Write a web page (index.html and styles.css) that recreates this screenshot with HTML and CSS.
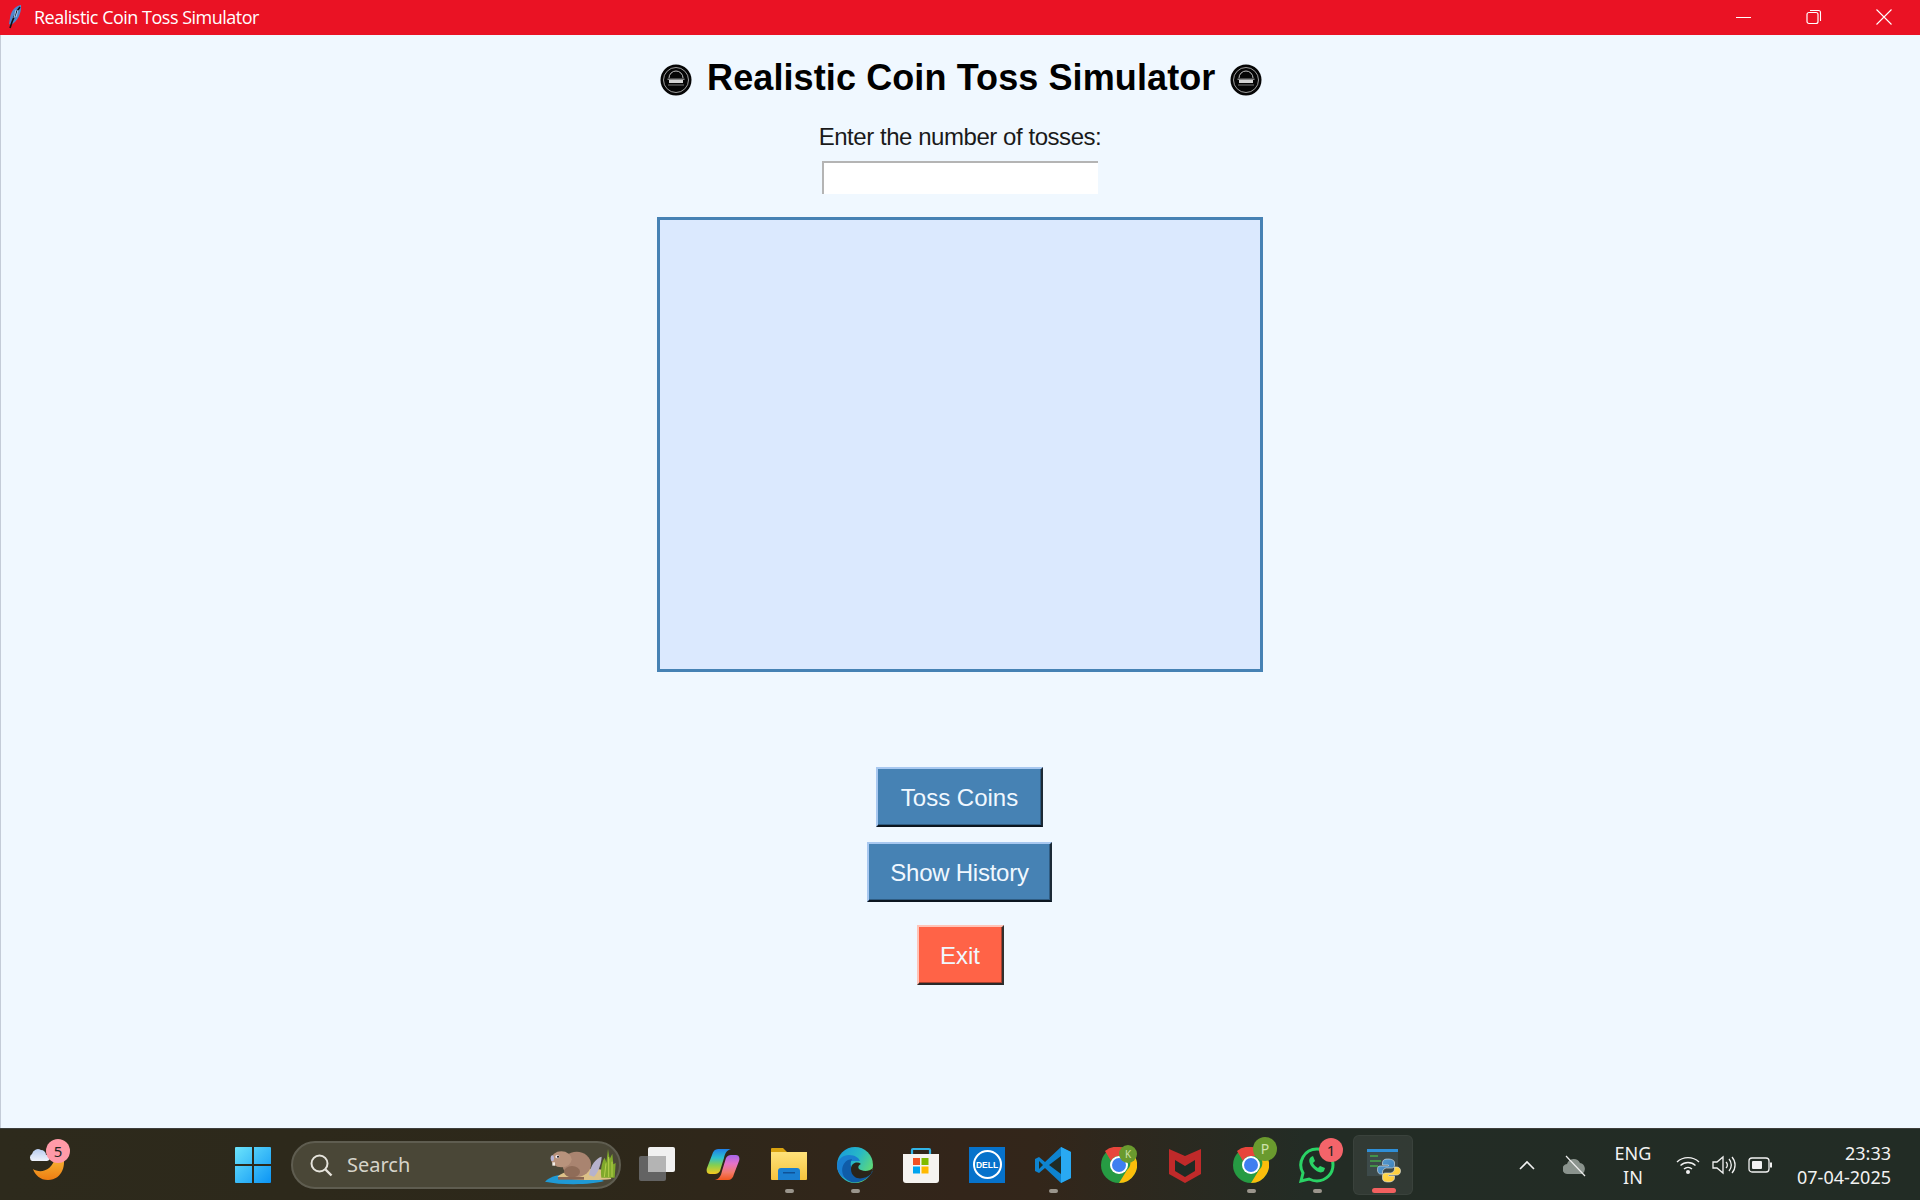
FILE: index.html
```html
<!DOCTYPE html>
<html lang="en">
<head>
<meta charset="utf-8">
<title>Realistic Coin Toss Simulator</title>
<link rel="stylesheet" href="styles.css">
</head>
<body>
<header class="titlebar">
  <svg class="feather" viewBox="0 0 16 26" width="16" height="26"><path d="M14 1C8 2 4 7 3 14l-1 6 2 1C10 18 15 9 14 1Z" fill="#4f86cc"/><path d="M13 3C9 8 6 14 3 24" stroke="#111" stroke-width="1.600" fill="none"/><path d="M9 6 7 14M11 6l-2 7" stroke="#a9c9ef" stroke-width="1"/></svg>
  <span class="titlebar-text">Realistic Coin Toss Simulator</span>
  <div class="win-controls">
    <span class="win-btn"><svg width="16" height="16" viewBox="0 0 16 16"><path d="M0 8.500h15" stroke="#fff" stroke-width="1" fill="none"/></svg></span>
    <span class="win-btn"><svg width="16" height="16" viewBox="0 0 16 16"><rect x="1" y="3.500" width="11" height="11" rx="2" stroke="#fff" stroke-width="1.200" fill="none"/><path d="M4 1.500h8.500a2 2 0 0 1 2 2V12" stroke="#fff" stroke-width="1.100" fill="none"/></svg></span>
    <span class="win-btn"><svg width="16" height="16" viewBox="0 0 16 16"><path d="M.5.5l15 15M15.500.5l-15 15" stroke="#fff" stroke-width="1.100" fill="none"/></svg></span>
  </div>
</header>

<main class="app">
  <h1 class="heading">
    <svg class="coin" viewBox="0 0 32 32" width="32" height="32"><circle cx="16" cy="16" r="15.500" fill="#060606"/><circle cx="16" cy="16" r="12.500" fill="none" stroke="#a0a0a0" stroke-width="1"/><path d="M9 14a7 7 0 0 1 14 0" fill="none" stroke="#c0c0c0" stroke-width="1"/><rect x="7.500" y="14.500" width="17" height="1.500" fill="#8a8a8a"/><rect x="9" y="16" width="14" height="3" fill="#d4d4d4"/><rect x="8" y="20.500" width="16" height="1" fill="#777"/></svg>
    <span class="heading-text">Realistic Coin Toss Simulator</span>
    <svg class="coin" viewBox="0 0 32 32" width="32" height="32"><circle cx="16" cy="16" r="15.500" fill="#060606"/><circle cx="16" cy="16" r="12.500" fill="none" stroke="#a0a0a0" stroke-width="1"/><path d="M9 14a7 7 0 0 1 14 0" fill="none" stroke="#c0c0c0" stroke-width="1"/><rect x="7.500" y="14.500" width="17" height="1.500" fill="#8a8a8a"/><rect x="9" y="16" width="14" height="3" fill="#d4d4d4"/><rect x="8" y="20.500" width="16" height="1" fill="#777"/></svg>
  </h1>
  <label class="prompt" for="tosses">Enter the number of tosses:</label>
  <input class="tosses" id="tosses" type="text">
  <div class="stage"></div>
  <button class="btn btn-blue btn-toss" type="button">Toss Coins</button>
  <button class="btn btn-blue btn-history" type="button">Show History</button>
  <button class="btn btn-red" type="button">Exit</button>
</main>

<footer class="taskbar">
  <div class="weather">
    <svg viewBox="0 0 44 48" width="44" height="48"><defs><linearGradient id="moon" x1="0" y1="0" x2="0" y2="1"><stop offset="0" stop-color="#f9c23c"/><stop offset="1" stop-color="#ee7d12"/></linearGradient><linearGradient id="cloud" x1="0" y1="0" x2="0" y2="1"><stop offset="0" stop-color="#b9cdf0"/><stop offset="1" stop-color="#eef2fb"/></linearGradient></defs><path d="M8 26C14 30 27 30 31 12L37 10C42 20 38 37 23 37 15 37 10 32 8 26Z" fill="url(#moon)"/><path d="M7 18a4 4 0 0 1 0-7 6 6 0 0 1 9-4 5 5 0 0 1 5 5 3 3 0 0 1 1 6Z" fill="url(#cloud)"/></svg>
    <span class="badge badge-weather">5</span>
  </div>
  <div class="tb-center">
    <div class="slot"><svg viewBox="0 0 36 36" width="36" height="36"><defs><linearGradient id="win" x1="0" y1="0" x2="1" y2="1"><stop offset="0" stop-color="#6ce4fb"/><stop offset="1" stop-color="#0b94f5"/></linearGradient></defs><path d="M0 1a1 1 0 0 1 1-1h16v17H0ZM19 0h16a1 1 0 0 1 1 1v16H19ZM0 19h17v17H1a1 1 0 0 1-1-1ZM19 19h17v16a1 1 0 0 1-1 1H19Z" fill="url(#win)"/></svg></div>
    <div class="search">
      <svg viewBox="0 0 24 24" width="24" height="24"><circle cx="10.500" cy="10.500" r="8" fill="none" stroke="#e6e4dc" stroke-width="2"/><path d="M16.500 16.500l6 6" stroke="#e6e4dc" stroke-width="2.400"/></svg>
      <span class="search-text">Search</span>
      <svg class="beaver" viewBox="0 0 216 120" width="72" height="40"><path d="M3 110C20 90 60 86 100 88l60 10 20 10c-30 10-120 14-177 2Z" fill="#1f9ad6"/><path d="M40 95C70 70 150 66 190 78l12 24c-40 6-120 4-162-7Z" fill="#dcc188"/><path d="M135 90C140 60 155 40 173 35 172 60 160 85 150 95Z" fill="#b6b2cc"/><path d="M172 98C168 70 176 45 182 38l5 14 5-40 5 30 8-16 3 32 7-4-3 44Z" fill="#7fa82b"/><path d="M181 96 186 55M194 96V36M204 96V50" stroke="#b6cf4c" stroke-width="3" fill="none"/><ellipse cx="98" cy="58" rx="43" ry="38" fill="#a98470"/><ellipse cx="52" cy="43" rx="31" ry="24" fill="#b8937c"/><ellipse cx="84" cy="80" rx="24" ry="17" fill="#8f6c58"/><path d="M42 96h78v8H42Z" fill="#8a6652"/><ellipse cx="40" cy="35" rx="6" ry="5" fill="#efe8ea"/><circle cx="42" cy="35" r="3" fill="#15121a"/><ellipse cx="25" cy="40" rx="5" ry="9" fill="#b7b5d6"/><rect x="25" y="52" width="8" height="10" fill="#f2eee6"/></svg>
    </div>
    <div class="slot"><svg viewBox="0 0 36 36" width="36" height="36"><rect x="0" y="9" width="27" height="25" rx="2" fill="#636363"/><rect x="9" y="0" width="27" height="25" rx="2" fill="#f1f1f1"/><rect x="9" y="9" width="18" height="16" fill="#b4b4b4"/></svg></div>
    <div class="slot"><svg viewBox="0 0 36 36" width="36" height="36"><defs><linearGradient id="cp1" x1="0" y1="0" x2="0" y2="1"><stop offset="0" stop-color="#1f7fe8"/><stop offset=".35" stop-color="#2cc0d0"/><stop offset=".65" stop-color="#86cf4f"/><stop offset="1" stop-color="#f7c91e"/></linearGradient><linearGradient id="cp2" x1="0" y1="0" x2="0" y2="1"><stop offset="0" stop-color="#f2561e"/><stop offset=".3" stop-color="#f27a6a"/><stop offset=".65" stop-color="#e572c8"/><stop offset="1" stop-color="#a766ea"/></linearGradient></defs><path d="M13 2H26C22 3 20 6 19 11L15 24C14 26 12 27 10 27H5C2 27 1 24 2 21L7 8C8 4 10 2 13 2Z" fill="url(#cp1)"/><path d="M13 2H26C22 3 20 6 19 11L15 24C14 26 12 27 10 27H5C2 27 1 24 2 21L7 8C8 4 10 2 13 2Z" fill="url(#cp2)" transform="rotate(180 18 17.500)"/></svg></div>
    <div class="slot slot-open"><svg viewBox="0 0 36 36" width="36" height="36"><defs><linearGradient id="fold" x1="0" y1="0" x2="0" y2="1"><stop offset="0" stop-color="#ffe27a"/><stop offset="1" stop-color="#f5c33d"/></linearGradient></defs><path d="M0 2a1 1 0 0 1 1-1h11l4 4h20v6H0Z" fill="#d9a20f"/><path d="M0 5h36v27a1 1 0 0 1-1 1H1a1 1 0 0 1-1-1Z" fill="url(#fold)"/><path d="M7 24a3 3 0 0 1 3-3h16a3 3 0 0 1 3 3v9H7Z" fill="#1a7fd1"/><rect x="12" y="25" width="12" height="1.500" fill="#0f5297"/></svg></div>
    <div class="slot slot-open"><svg viewBox="0 0 36 36" width="36" height="36"><defs><linearGradient id="edge1" x1="0" y1="0" x2="1" y2=".6"><stop offset="0" stop-color="#1797dd"/><stop offset=".55" stop-color="#27b9c6"/><stop offset="1" stop-color="#63db72"/></linearGradient></defs><circle cx="18" cy="18" r="18" fill="url(#edge1)"/><path d="M0 18C1 12 6 8 12 8 18 8 22 11 23 14L11 14 9 32C3 29 0 24 0 18Z" fill="#1a7fd0"/><path d="M11 13C5 16 3 25 8 31 12 36 20 37 27 33 31 31 34 28 36 24 30 28 22 28 17 24 13 21 13 16 15 12Z" fill="#0f5ca8"/><path d="M14 22C14 16 20 14 24 17 21 18 20 22 24 23 28 25 33 24 36 21L34 27C30 31 22 33 18 30 15 28 14 25 14 22Z" fill="#2a241a"/></svg></div>
    <div class="slot"><svg viewBox="0 0 36 36" width="36" height="36"><path d="M9 7V3a1 1 0 0 1 1-1h16a1 1 0 0 1 1 1v4" fill="none" stroke="#32b4e6" stroke-width="2.200"/><path d="M0 7h36v26a3 3 0 0 1-3 3H3a3 3 0 0 1-3-3Z" fill="#f5f3f0"/><rect x="10" y="11" width="7" height="7" fill="#f25022"/><rect x="18.500" y="11" width="7" height="7" fill="#7fba00"/><rect x="10" y="19.500" width="7" height="7" fill="#00a4ef"/><rect x="18.500" y="19.500" width="7" height="7" fill="#ffb900"/></svg></div>
    <div class="slot"><span class="dell"><span class="dell-ring">DELL</span></span></div>
    <div class="slot slot-open"><svg viewBox="0 0 36 36" width="36" height="36"><path d="M26 0l10 5v26l-10 5L10 21l-6 5-4-2V12l4-2 6 5Z" fill="#0e83cf"/><path d="M26 0v36l10-5V5Z" fill="#29a9f2"/><path d="M26 9 14 18l12 9Z" fill="#1f2b24"/><path d="M4 14v8l4-4Z" fill="#1f2b24"/></svg></div>
    <div class="slot"><svg viewBox="0 0 36 36" width="36" height="36"><circle cx="18" cy="18" r="18" fill="#269b43"/><path d="M18 0a18 18 0 0 1 15.600 9H18a9 9 0 0 0-8 5L4 4A18 18 0 0 1 18 0Z" fill="#e8453b"/><path d="M33.600 9A18 18 0 0 1 18 36l8-13a9 9 0 0 0 0-14Z" fill="#fbbd0b"/><circle cx="18" cy="18" r="9" fill="#fff"/><circle cx="18" cy="18" r="7" fill="#3f7ff0"/></svg><span class="badge badge-k">K</span></div>
    <div class="slot"><svg viewBox="0 0 32 36" width="32" height="36"><path d="M0 2l16 7 16-7v25L16 36 0 27Z" fill="#c02a2a"/><path d="M6 11l10 5 10-5v13l-10 6-10-6Z" fill="#1f2b24"/><path d="M6 10v3l10 6 10-6v-3l-10 5Z" fill="#c02a2a"/></svg></div>
    <div class="slot slot-open"><svg viewBox="0 0 36 36" width="36" height="36"><circle cx="18" cy="18" r="18" fill="#269b43"/><path d="M18 0a18 18 0 0 1 15.600 9H18a9 9 0 0 0-8 5L4 4A18 18 0 0 1 18 0Z" fill="#e8453b"/><path d="M33.600 9A18 18 0 0 1 18 36l8-13a9 9 0 0 0 0-14Z" fill="#fbbd0b"/><circle cx="18" cy="18" r="9" fill="#fff"/><circle cx="18" cy="18" r="7" fill="#3f7ff0"/></svg><span class="badge badge-p">P</span></div>
    <div class="slot slot-open"><svg viewBox="0 0 36 36" width="36" height="36"><path d="M18 2a16 16 0 0 1 0 32c-3 0-6-1-8-2l-8 2 2-8A16 16 0 0 1 18 2Z" fill="#1f2b24" stroke="#2ad365" stroke-width="3"/><path d="M12 10c-3 2-2 7 2 11s8 6 11 3l1-3-5-2-2 2c-2-1-4-3-5-5l2-2-2-5Z" fill="#2ad365"/></svg><span class="badge badge-w">1</span></div>
    <div class="slot slot-active"><svg viewBox="0 0 36 36" width="36" height="36"><defs><linearGradient id="py1" x1="0" y1="0" x2="1" y2="1"><stop offset="0" stop-color="#5a9fd4"/><stop offset="1" stop-color="#3a7cb4"/></linearGradient><linearGradient id="py2" x1="0" y1="0" x2="1" y2="1"><stop offset="0" stop-color="#ffe052"/><stop offset="1" stop-color="#ffc331"/></linearGradient></defs><rect x="2" y="2" width="31" height="27" fill="#3d4a4a"/><rect x="2" y="2" width="31" height="3" fill="#2f8fd8"/><path d="M5 9h8M5 14h11M5 19h8" stroke="#46a84a" stroke-width="1.500"/><g transform="translate(1.500 -1)" stroke="#dfe8ee" stroke-width=".6"><path d="M21 13c-4 0-5 2-5 4v2h6v1h-8c-3 0-3 2-3 4s1 4 3 4h2v-2c0-2 2-4 4-4h5c2 0 3-1 3-3v-2c0-3-3-4-7-4Z" fill="url(#py1)"/><path d="M22 36c4 0 6-2 6-4v-2h-6v-1h8c3 0 4-2 4-4s-1-4-4-4h-2v2c0 2-2 4-4 4h-5c-2 0-3 1-3 3v2c0 3 2 4 6 4Z" fill="url(#py2)"/></g></svg></div>
  </div>
  <div class="tray">
    <svg class="tray-chevron" viewBox="0 0 16 10" width="16" height="10"><path d="M1 9l7-7 7 7" stroke="#f2f2f2" stroke-width="1.600" fill="none"/></svg>
    <svg class="tray-cloud" viewBox="0 0 24 22" width="24" height="22"><path d="M5 19a5 5 0 0 1-1-10 7 7 0 0 1 13-1 6 6 0 0 1 2 11Z" fill="#8a938d"/><path d="M3 1l19 20" stroke="#eee" stroke-width="1.200"/></svg>
    <div class="lang"><span>ENG</span><span>IN</span></div>
    <div class="tray-icons">
      <svg viewBox="0 0 24 20" width="24" height="20"><path d="M1 7a16 16 0 0 1 22 0M4.500 10.500a11 11 0 0 1 15 0M8 14a6 6 0 0 1 8 0" stroke="#f2f2f2" stroke-width="1.400" fill="none"/><circle cx="12" cy="17" r="2" fill="#f2f2f2"/></svg>
      <svg viewBox="0 0 24 20" width="24" height="20"><path d="M1 7h4l6-5v16l-6-5H1Z" stroke="#f2f2f2" stroke-width="1.300" fill="none"/><path d="M14 7a4 4 0 0 1 0 6M17 4a9 9 0 0 1 0 12M20 2a12 12 0 0 1 0 16" stroke="#f2f2f2" stroke-width="1.300" fill="none"/></svg>
      <svg viewBox="0 0 24 20" width="24" height="20"><rect x="1" y="3" width="20" height="14" rx="3" stroke="#f2f2f2" stroke-width="1.300" fill="none"/><rect x="4" y="6" width="10" height="8" rx="1" fill="#f2f2f2"/><rect x="22" y="7.500" width="2" height="5" fill="#f2f2f2"/></svg>
    </div>
    <div class="clock"><span>23:33</span><span>07-04-2025</span></div>
  </div>
</footer>
</body>
</html>
```
FILE: styles.css
```css
* { box-sizing: border-box; }
html, body { height: 100%; margin: 0; }
body { display: flex; flex-direction: column; width: 1920px; height: 1200px; overflow: hidden; background: #f0f8ff; font-family: "Liberation Sans", Arial, sans-serif; }

.titlebar { display: flex; align-items: center; flex: 0 0 35px; background: #ea1224; color: #fff; padding-left: 7px; }
.feather { flex: none; margin-bottom: 2px; }
.titlebar-text { margin: 0 0 2px 11px; font: 18px "Open Sans", "Noto Sans", sans-serif; letter-spacing: -0.5px; }
.win-controls { display: flex; margin-left: auto; padding: 0 1px 2px 0; }
.win-btn { display: flex; align-items: center; justify-content: center; width: 70px; height: 33px; }

.app { flex: 1; display: flex; flex-direction: column; align-items: center; box-shadow: inset 1px 0 0 #c4ccd8; }
.heading { display: flex; align-items: center; margin: 22px 0 0; padding-left: 2px; font-size: 36px; line-height: 42px; font-weight: 700; color: #000; letter-spacing: 0.1px; }
.heading-text { margin: 0 14.500px 0 15px; }
.coin { margin-top: 4px; }
.prompt { margin-top: 24px; font-size: 24px; line-height: 28px; color: #1a1a1a; letter-spacing: -0.45px; }
.tosses { width: 276px; height: 33px; margin-top: 10px; padding: 0; background: #fff; border: 0; border-top: 2px solid #b4b4b4; border-left: 2px solid #b4b4b4; border-radius: 0; }
.stage { width: 606px; height: 455px; margin-top: 23px; margin-bottom: 95px; background: #dbe9fe; border: 3px solid #4682b4; }
.btn { display: block; height: 60px; padding: 2px 0 0; font: 24px "Liberation Sans", Arial, sans-serif; color: #f0f8ff; border: 2px solid; border-color: #a8c8f0 #1c2a36 #0c1620 #a8c8f0; box-shadow: inset -1px -1px 0 #2f5c82; }
.btn-blue { background: #4682b4; margin-right: 1px; }
.btn-toss { width: 167px; }
.btn-history { width: 185px; margin-top: 15px; letter-spacing: -0.25px; }
.btn-red { width: 87px; margin-top: 23px; background: #ff6347; border-color: #ffc4b8 #33302e #2a2a2a #ffc4b8; box-shadow: inset -1px -1px 0 #a8402e; }

.taskbar { flex: 0 0 72px; display: flex; align-items: center; position: relative; background: linear-gradient(90deg, #2d2a1c 0%, #2d281a 30%, #33251a 50%, #33261a 54%, #232c25 68%, #222c25 100%); border-top: 1px solid #3e3f3c; color: #f2f2f2; font-family: "Noto Sans", "Open Sans", sans-serif; }
.weather { position: relative; flex: none; display: flex; justify-content: center; width: 94px; padding-top: 4px; }
.tb-center { display: flex; align-items: center; margin-left: 126px; }
.slot { position: relative; display: flex; align-items: center; justify-content: center; width: 66px; height: 60px; flex: none; }
.slot-open::after { content: ""; position: absolute; left: 29px; bottom: 2px; width: 9px; height: 4px; border-radius: 2px; background: #9a958c; }
.slot-active { width: 60px; margin-left: 3px; border-radius: 6px; background: rgba(255,255,255,.07); border: 1px solid rgba(255,255,255,.04); }
.slot-active::after { content: ""; position: absolute; left: 18px; bottom: 1px; width: 24px; height: 5px; border-radius: 3px; background: #f2605f; }
.search { display: flex; align-items: center; flex: none; width: 330px; height: 48px; margin: 0 3px 0 5px; padding: 0 3px 0 16px; border-radius: 24px; background: #4a4737; border: 2px solid #5f5d50; }
.search-text { margin-left: 14px; font-size: 20px; color: #d6d4ca; }
.beaver { margin-left: auto; }
.dell { display: flex; align-items: center; justify-content: center; width: 36px; height: 36px; background: #0672cb; }
.dell-ring { display: flex; align-items: center; justify-content: center; width: 29px; height: 29px; border: 2px solid #fff; border-radius: 50%; color: #fff; font: 700 8.500px "Liberation Sans", sans-serif; }
.badge { position: absolute; display: flex; align-items: center; justify-content: center; border-radius: 50%; color: #20241f; font-size: 13px; }
.badge-weather { left: 46px; top: 0; width: 24px; height: 24px; background: #ff9aa8; font-size: 15px; }
.badge-k { left: 33px; top: 10px; width: 18px; height: 18px; background: #6a9a2e; color: #cfe3ad; font-size: 10px; }
.badge-p { left: 35px; top: 2px; width: 24px; height: 24px; background: #6a9a2e; color: #cfe3ad; font-size: 14px; }
.badge-w { left: 35px; top: 3px; width: 24px; height: 24px; background: #f4646a; font-size: 15px; }

.tray { display: flex; align-items: center; margin-left: auto; padding-right: 29px; }
.tray-chevron { margin-right: 28px; }
.tray-cloud { margin-right: 14px; margin-top: 2px; }
.lang { display: flex; flex-direction: column; align-items: center; width: 64px; font-size: 18px; line-height: 24px; }
.tray-icons { display: flex; gap: 12px; margin-left: 11px; margin-right: 24px; }
.clock { display: flex; flex-direction: column; align-items: flex-end; width: 95px; font-size: 18px; line-height: 24px; }
```
